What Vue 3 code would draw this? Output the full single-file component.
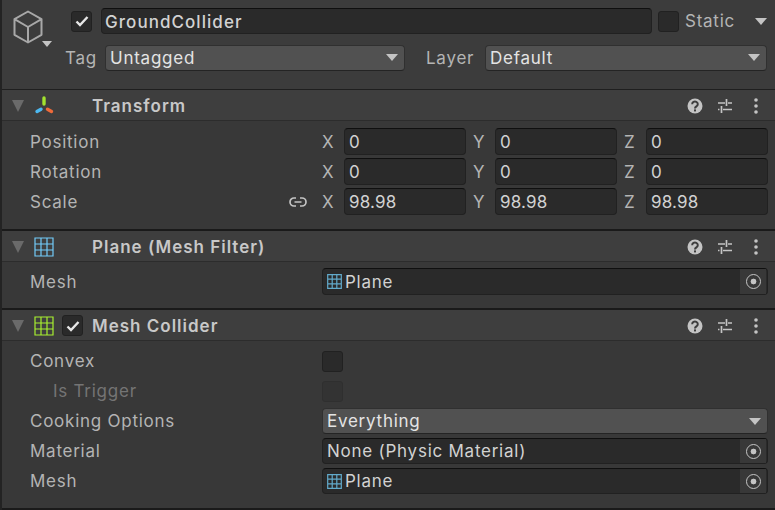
<template>
  <div class="inspector">
    <div class="object-head">
      <svg class="cube" width="32" height="34" viewBox="0 0 32 34">
        <path d="M16 1.5 L29.5 9.2 V24.8 L16 32.5 L2.5 24.8 V9.2 Z M2.5 9.2 L16 17 L29.5 9.2 M16 17 V32.5" fill="none" stroke="#a8a8a8" stroke-width="2" stroke-linejoin="round" />
      </svg>
      <i class="caret cube-caret"></i>
      <div class="head-rows">
        <div class="head-row first">
          <span class="check on"><svg width="14" height="12" viewBox="0 0 14 12"><path d="M1.5 6.5 L5 10 L12.5 2" fill="none" stroke="#e6e6e6" stroke-width="2.4" /></svg></span>
          <div class="field name">GroundCollider</div>
          <span class="check"></span>
          <span class="static">Static</span>
          <i class="caret"></i>
        </div>
        <div class="head-row second">
          <span class="head-label tag-label">Tag</span>
          <div class="popup tag">Untagged<i class="caret"></i></div>
          <span class="head-label layer-label">Layer</span>
          <div class="popup layer-popup">Default<i class="caret"></i></div>
        </div>
      </div>
    </div>

    <section class="component">
      <header class="comp-head">
        <i class="fold"></i>
        <svg class="comp-icon" width="20" height="20" viewBox="0 0 20 20">
          <line x1="10" y1="2" x2="10" y2="8" stroke="#a2e22e" stroke-width="3.4" stroke-linecap="round" />
          <line x1="3" y1="15.5" x2="7" y2="13.2" stroke="#4cb8f0" stroke-width="3.4" stroke-linecap="round" />
          <line x1="17.5" y1="15.5" x2="13.5" y2="13.2" stroke="#ef6a3a" stroke-width="3.4" stroke-linecap="round" />
        </svg>
        <span class="comp-title">Transform</span>
        <div class="tools">
          <svg class="help" width="16" height="16" viewBox="0 0 16 16">
            <circle cx="8" cy="8" r="7.5" fill="#c4c4c4" />
            <path d="M5.2 6.2 a2.8 2.6 0 1 1 4.3 2.1 c-1 .7 -1.5 1 -1.5 2.1" fill="none" stroke="#3e3e3e" stroke-width="2" />
            <rect x="7" y="11.4" width="2" height="2" fill="#3e3e3e" />
          </svg>
          <svg class="presets" width="16" height="16" viewBox="0 0 16 16">
            <path d="M1 5 H8 M11 5 H15 M9.5 1 V8 M1 11.5 H2.5 M6 11.5 H15 M4.5 8 V15" fill="none" stroke="#c4c4c4" stroke-width="1.7" />
          </svg>
          <svg class="menu" width="4" height="16" viewBox="0 0 4 16">
            <circle cx="2" cy="2" r="1.8" fill="#c4c4c4" />
            <circle cx="2" cy="8" r="1.8" fill="#c4c4c4" />
            <circle cx="2" cy="14" r="1.8" fill="#c4c4c4" />
          </svg>
        </div>
      </header>
      <div class="comp-body transform">
        <div v-for="row in transformRows" :key="row.label" class="row">
          <span class="label">{{ row.label }}</span>
          <svg v-if="row.linked" class="link" width="18" height="12" viewBox="0 0 18 12">
            <path d="M7 2 H5 a4 4 0 0 0 0 8 H7 M11 2 H13 a4 4 0 0 1 0 8 H11 M5.5 6 H12.5" fill="none" stroke="#c4c4c4" stroke-width="1.7" />
          </svg>
          <div class="xyz">
            <div v-for="(v, i) in row.values" :key="i" class="axis">
              <span class="axis-name">{{ 'XYZ'[i] }}</span>
              <div class="field num">{{ v }}</div>
            </div>
          </div>
        </div>
      </div>
    </section>

    <section class="component">
      <header class="comp-head">
        <i class="fold"></i>
        <svg class="comp-icon" width="20" height="20" viewBox="0 0 20 20">
          <path d="M1 1 H19 V19 H1 Z M7 1 V19 M13 1 V19 M1 7 H19 M1 13 H19" fill="none" stroke="#72ccfa" stroke-width="1.2" />
        </svg>
        <span class="comp-title">Plane (Mesh Filter)</span>
        <div class="tools">
          <svg class="help" width="16" height="16" viewBox="0 0 16 16">
            <circle cx="8" cy="8" r="7.5" fill="#c4c4c4" />
            <path d="M5.2 6.2 a2.8 2.6 0 1 1 4.3 2.1 c-1 .7 -1.5 1 -1.5 2.1" fill="none" stroke="#3e3e3e" stroke-width="2" />
            <rect x="7" y="11.4" width="2" height="2" fill="#3e3e3e" />
          </svg>
          <svg class="presets" width="16" height="16" viewBox="0 0 16 16">
            <path d="M1 5 H8 M11 5 H15 M9.5 1 V8 M1 11.5 H2.5 M6 11.5 H15 M4.5 8 V15" fill="none" stroke="#c4c4c4" stroke-width="1.7" />
          </svg>
          <svg class="menu" width="4" height="16" viewBox="0 0 4 16">
            <circle cx="2" cy="2" r="1.8" fill="#c4c4c4" />
            <circle cx="2" cy="8" r="1.8" fill="#c4c4c4" />
            <circle cx="2" cy="14" r="1.8" fill="#c4c4c4" />
          </svg>
        </div>
      </header>
      <div class="comp-body filter">
        <div class="row">
          <span class="label">Mesh</span>
          <div class="field object">
            <svg class="mini" width="15" height="15" viewBox="0 0 15 15"><path d="M.7 .7 H14.3 V14.3 H.7 Z M5.2 .7 V14.3 M9.8 .7 V14.3 M.7 5.2 H14.3 M.7 9.8 H14.3" fill="none" stroke="#62aacb" stroke-width="1.2" /></svg>
            <span>Plane</span>
            <span class="picker"><i></i></span>
          </div>
        </div>
      </div>
    </section>

    <section class="component">
      <header class="comp-head">
        <i class="fold"></i>
        <svg class="comp-icon" width="20" height="20" viewBox="0 0 20 20">
          <path d="M1 1 H19 V19 H1 Z M7 1 V19 M13 1 V19 M1 7 H19 M1 13 H19" fill="none" stroke="#a8f030" stroke-width="1.2" />
        </svg>
        <span class="check on comp-check"><svg width="14" height="12" viewBox="0 0 14 12"><path d="M1.5 6.5 L5 10 L12.5 2" fill="none" stroke="#e6e6e6" stroke-width="2.4" /></svg></span>
        <span class="comp-title collider">Mesh Collider</span>
        <div class="tools">
          <svg class="help" width="16" height="16" viewBox="0 0 16 16">
            <circle cx="8" cy="8" r="7.5" fill="#c4c4c4" />
            <path d="M5.2 6.2 a2.8 2.6 0 1 1 4.3 2.1 c-1 .7 -1.5 1 -1.5 2.1" fill="none" stroke="#3e3e3e" stroke-width="2" />
            <rect x="7" y="11.4" width="2" height="2" fill="#3e3e3e" />
          </svg>
          <svg class="presets" width="16" height="16" viewBox="0 0 16 16">
            <path d="M1 5 H8 M11 5 H15 M9.5 1 V8 M1 11.5 H2.5 M6 11.5 H15 M4.5 8 V15" fill="none" stroke="#c4c4c4" stroke-width="1.7" />
          </svg>
          <svg class="menu" width="4" height="16" viewBox="0 0 4 16">
            <circle cx="2" cy="2" r="1.8" fill="#c4c4c4" />
            <circle cx="2" cy="8" r="1.8" fill="#c4c4c4" />
            <circle cx="2" cy="14" r="1.8" fill="#c4c4c4" />
          </svg>
        </div>
      </header>
      <div class="comp-body collider-body">
        <div class="row">
          <span class="label">Convex</span>
          <span class="check"></span>
        </div>
        <div class="row">
          <span class="label sub">Is Trigger</span>
          <span class="check off"></span>
        </div>
        <div class="row">
          <span class="label">Cooking Options</span>
          <div class="popup wide">Everything<i class="caret"></i></div>
        </div>
        <div class="row">
          <span class="label">Material</span>
          <div class="field object">
            <span>None (Physic Material)</span>
            <span class="picker"><i></i></span>
          </div>
        </div>
        <div class="row">
          <span class="label">Mesh</span>
          <div class="field object">
            <svg class="mini" width="15" height="15" viewBox="0 0 15 15"><path d="M.7 .7 H14.3 V14.3 H.7 Z M5.2 .7 V14.3 M9.8 .7 V14.3 M.7 5.2 H14.3 M.7 9.8 H14.3" fill="none" stroke="#62aacb" stroke-width="1.2" /></svg>
            <span>Plane</span>
            <span class="picker"><i></i></span>
          </div>
        </div>
      </div>
    </section>
  </div>
</template>

<script setup>
const transformRows = [
  { label: 'Position', values: ['0', '0', '0'] },
  { label: 'Rotation', values: ['0', '0', '0'] },
  { label: 'Scale', values: ['98.98', '98.98', '98.98'], linked: true }
]
</script>

<style>
html,
body {
  margin: 0;
  background: #383838;
}
</style>

<style scoped>
.inspector {
  position: relative;
  width: 775px;
  height: 510px;
  overflow: hidden;
  box-sizing: border-box;
  border-left: 2px solid #232323;
  background: #383838;
  font-family: Inter, "Liberation Sans", sans-serif;
  font-size: 17px;
  letter-spacing: 0.75px;
  color: #c4c4c4;
}

/* object header */
.object-head {
  position: relative;
  height: 90px;
  box-sizing: border-box;
  border-bottom: 1px solid #1f1f1f;
  background: #3c3c3c;
}

.cube {
  position: absolute;
  left: 10px;
  top: 10px;
}

.caret.cube-caret {
  position: absolute;
  left: 40px;
  top: 41px;
  border-left-width: 5px;
  border-right-width: 5px;
  border-top-width: 6px;
}

.head-rows {
  padding: 8px 0 0 63px;
}

.head-row {
  display: flex;
  align-items: center;
}

.head-row.first {
  height: 26px;
  padding-left: 6px;
}

.head-row.first .caret {
  margin-left: 20px;
}

.head-row.second {
  margin-top: 11px;
  height: 26px;
}

.name {
  width: 551px;
  height: 26px;
  margin: 0 6px 0 9px;
  padding: 2px 0 0 3px;
  font-weight: 500;
  letter-spacing: 1.05px;
  color: #d2d2d2;
}

.static {
  margin-left: 6px;
  color: #b4b4b4;
}

.head-label {
  color: #b4b4b4;
}

.tag-label {
  width: 40px;
}

.layer-label {
  width: 59px;
  margin-left: 21px;
}

.popup {
  position: relative;
  display: flex;
  align-items: center;
  box-sizing: border-box;
  height: 26px;
  padding-left: 4px;
  border: 1px solid #303030;
  border-bottom-color: #242424;
  border-radius: 4px;
  background: #515151;
  color: #e4e4e4;
}

.popup .caret {
  position: absolute;
  right: 6px;
  top: 8px;
}

.tag {
  width: 300px;
}

.layer-popup {
  width: 282px;
}

.wide {
  width: 446px;
}

.wide .caret {
  top: 9px;
}

.caret {
  display: block;
  width: 0;
  height: 0;
  border-left: 6px solid transparent;
  border-right: 6px solid transparent;
  border-top: 7px solid #c4c4c4;
}

/* shared controls */
.check {
  display: flex;
  flex: none;
  align-items: center;
  justify-content: center;
  box-sizing: border-box;
  width: 21px;
  height: 21px;
  border: 1px solid #212121;
  border-radius: 3px;
  background: #2a2a2a;
}

.check.off {
  border-color: #2f2f2f;
  background: #333333;
}

.field {
  display: flex;
  align-items: center;
  box-sizing: border-box;
  border: 1px solid #212121;
  border-top-color: #0f0f0f;
  border-radius: 4px;
  background: #2a2a2a;
  color: #d2d2d2;
}

/* components */
.component {
  border-bottom: 2px solid #1a1a1a;
}

.comp-head {
  display: flex;
  align-items: center;
  box-sizing: border-box;
  height: 31px;
  padding: 1px 0 0 10px;
  border-bottom: 1px solid #2c2c2c;
  background: #3e3e3e;
}

.fold {
  display: block;
  flex: none;
  width: 0;
  height: 0;
  border-left: 6px solid transparent;
  border-right: 6px solid transparent;
  border-top: 12px solid #6a6a6a;
}

.comp-icon {
  flex: none;
  margin-left: 10px;
}

.comp-title {
  margin-left: 38px;
  font-weight: 600;
  letter-spacing: 1px;
  color: #c8c8c8;
}

.comp-title.collider {
  margin-left: 9px;
}

.comp-check {
  margin-left: 8px;
}

.tools {
  display: flex;
  align-items: center;
  margin-left: auto;
  padding-right: 17px;
}

.help {
  margin-right: 14px;
}

.presets {
  margin-right: 21px;
}

.comp-body .row {
  position: relative;
  display: flex;
  align-items: center;
  box-sizing: border-box;
  height: 30px;
  padding-left: 320px;
}

.label {
  position: absolute;
  left: 28px;
  color: #b4b4b4;
}

.label.sub {
  left: 51px;
  color: #747474;
}

.transform {
  padding: 6px 0 12px;
}

.transform .xyz {
  align-self: flex-start;
  margin-top: 1px;
}

.filter {
  padding: 5px 0 11px;
}

.filter .object {
  align-self: flex-start;
  margin-top: 1px;
}

.collider-body {
  padding: 5px 0 12px;
}

.link {
  position: absolute;
  left: 287px;
}

.xyz {
  display: flex;
  gap: 7px;
}

.axis {
  display: flex;
  align-items: center;
}

.axis-name {
  width: 22px;
  color: #b4b4b4;
}

.num {
  width: 122px;
  height: 27px;
  padding-left: 4px;
  letter-spacing: 0.2px;
}

.object {
  position: relative;
  width: 446px;
  height: 27px;
  padding-left: 4px;
}

.collider-body .object {
  height: 26px;
}

.mini {
  flex: none;
  margin-right: 3px;
}

.picker {
  position: absolute;
  right: 1px;
  top: 0;
  bottom: 0;
  display: flex;
  align-items: center;
  justify-content: center;
  width: 26px;
  background: #383838;
}

.picker i {
  display: block;
  box-sizing: border-box;
  width: 15px;
  height: 15px;
  border: 1.5px solid #c4c4c4;
  border-radius: 50%;
  background: radial-gradient(circle, #c4c4c4 0 2.6px, transparent 3.2px);
}
</style>
